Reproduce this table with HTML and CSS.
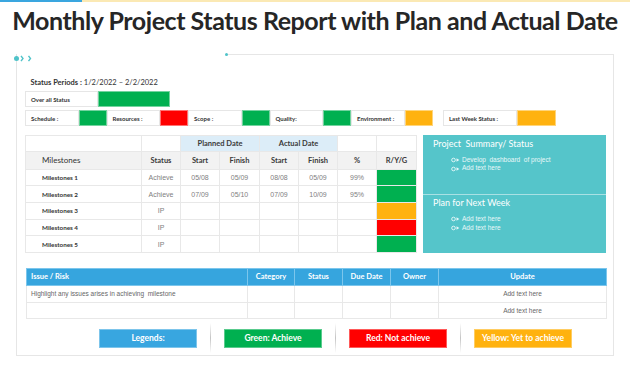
FILE: index.html
```html
<!DOCTYPE html>
<html>
<head>
<meta charset="utf-8">
<title>Monthly Project Status Report</title>
<link rel="stylesheet" href="styles.css">
</head>
<body>
<div class="topbar"><span class="tb-blue"></span><span class="tb-yellow"></span></div>
<h1 class="title">Monthly Project Status Report with Plan and Actual Date</h1>
<div class="panel">
  <div class="marker">
    <span class="mdot"></span>
    <svg class="chev" width="12" height="7" viewBox="0 0 12 7"><polyline points="1,0.8 3,3.5 1,6.2" /><polyline points="8.5,0.8 10.5,3.5 8.5,6.2" /></svg>
  </div>
  <div class="period"><b>Status Periods :</b> 1/2/2022 – 2/2/2022</div>
  <div class="overall">
    <div class="lbl wide">Over all Status</div><div class="sw green big"></div>
  </div>
  <div class="statusrow">
    <div class="lbl">Schedule :</div><div class="sw green"></div>
    <div class="lbl">Resources :</div><div class="sw red"></div>
    <div class="lbl">Scope :</div><div class="sw green"></div>
    <div class="lbl">Quality:</div><div class="sw green"></div>
    <div class="lbl">Environment :</div><div class="sw yellow"></div>
    <div class="lbl lw">Last Week Status :</div><div class="sw yellow lwsw"></div>
  </div>
  <div class="mid">
    <table class="ms">
      <colgroup><col><col><col><col><col><col><col><col></colgroup>
      <tr class="h1"><th></th><th></th><th colspan="2" class="pd">Planned Date</th><th colspan="2" class="pd">Actual Date</th><th></th><th></th></tr>
      <tr class="h2"><th class="first">Milestones</th><th>Status</th><th>Start</th><th>Finish</th><th>Start</th><th>Finish</th><th>%</th><th>R/Y/G</th></tr>
      <tr><td class="first">Milestones 1</td><td>Achieve</td><td>05/08</td><td>05/09</td><td>08/08</td><td>05/09</td><td>99%</td><td class="green"></td></tr>
      <tr><td class="first">Milestones 2</td><td>Achieve</td><td>07/09</td><td>05/10</td><td>07/09</td><td>10/09</td><td>95%</td><td class="green"></td></tr>
      <tr><td class="first">Milestones 3</td><td>IP</td><td></td><td></td><td></td><td></td><td></td><td class="yellow"></td></tr>
      <tr><td class="first">Milestones 4</td><td>IP</td><td></td><td></td><td></td><td></td><td></td><td class="red"></td></tr>
      <tr><td class="first">Milestones 5</td><td>IP</td><td></td><td></td><td></td><td></td><td></td><td class="green"></td></tr>
    </table>
    <div class="summary">
      <div class="sec">
        <div class="sec-title">Project&nbsp; Summary/ Status</div>
        <ul class="bul">
          <li><svg class="bi" width="9" height="6" viewBox="0 0 9 6"><circle cx="2.5" cy="3" r="1.8"/><path d="M5.5 1.2 L8.3 3 L5.5 4.8 Z"/></svg>Develop&nbsp; dashboard&nbsp; of project</li>
          <li><svg class="bi" width="9" height="6" viewBox="0 0 9 6"><circle cx="2.5" cy="3" r="1.8"/><path d="M5.5 1.2 L8.3 3 L5.5 4.8 Z"/></svg>Add text here</li>
        </ul>
      </div>
      <div class="sec">
        <div class="sec-title">Plan for Next Week</div>
        <ul class="bul">
          <li><svg class="bi" width="9" height="6" viewBox="0 0 9 6"><circle cx="2.5" cy="3" r="1.8"/><path d="M5.5 1.2 L8.3 3 L5.5 4.8 Z"/></svg>Add text here</li>
          <li><svg class="bi" width="9" height="6" viewBox="0 0 9 6"><circle cx="2.5" cy="3" r="1.8"/><path d="M5.5 1.2 L8.3 3 L5.5 4.8 Z"/></svg>Add text here</li>
        </ul>
      </div>
    </div>
  </div>
  <table class="issues">
    <colgroup><col><col><col><col><col><col></colgroup>
    <tr class="ih"><th class="first">Issue / Risk</th><th>Category</th><th>Status</th><th>Due Date</th><th>Owner</th><th>Update</th></tr>
    <tr><td class="first">Highlight any issues arises in achieving&nbsp; milestone</td><td></td><td></td><td></td><td></td><td>Add text here</td></tr>
    <tr><td class="first"></td><td></td><td></td><td></td><td></td><td>Add text here</td></tr>
  </table>
  <div class="legends">
    <div class="lg blue">Legends:</div>
    <span class="sep"></span>
    <div class="lg green">Green: Achieve</div>
    <span class="sep"></span>
    <div class="lg red">Red: Not achieve</div>
    <span class="sep"></span>
    <div class="lg yellow">Yellow: Yet to achieve</div>
  </div>
</div>
</body>
</html>
```
FILE: styles.css
```css
* { box-sizing: border-box; }
html, body { margin: 0; padding: 0; background: #fff; }
body {
  width: 630px; height: 380px; overflow: hidden;
  font-family: Lato, "Open Sans", sans-serif; color: #333;
}
.topbar { display: flex; height: 2px; }
.tb-blue { width: 82px; background: #3aa6df; }
.tb-yellow { flex: 1; background: #fbe9b4; }

.title {
  margin: 0; height: 52px; padding-top: 4px;
  font-size: 25px; line-height: 28px; font-weight: 700;
  text-align: center; color: #262626; letter-spacing: -0.45px; white-space: nowrap;
}

.panel {
  position: relative;
  margin: 0 16px; height: 302px;
  border: 1px solid #e6e6e6; border-top: none;
  padding: 23px 7px 0 8px;
}
.panel::before {
  content: ""; position: absolute; top: 0; left: 209px; right: -1px;
  border-top: 1px solid #e6e6e6;
}
.panel::after {
  content: ""; position: absolute; top: -1.5px; left: 207.5px;
  width: 3px; height: 3px; border-radius: 50%; background: #4fc3c9;
}
.marker {
  position: absolute; left: -3.5px; top: 0.5px;
  display: flex; align-items: center; gap: 1px;
}
.mdot { width: 5px; height: 5px; border-radius: 50%; background: #4fc3c9; }
.chev { display: block; }
.chev polyline { fill: none; stroke: #4fc3c9; stroke-width: 1.4; }

.period { font-size: 7.5px; line-height: 12px; padding-left: 5.5px; color: #333; }
.period b { font-weight: 700; }

.overall { display: flex; margin-top: 2px; height: 16px; }
.statusrow { display: flex; margin-top: 3px; height: 16px; }
.lbl {
  width: 53.5px; border: 1px solid #e6e6e6;
  font-size: 6px; font-weight: 700; color: #333;
  padding-left: 5px; display: flex; align-items: center; white-space: nowrap;
}
.lbl.wide { width: 73px; }
.lbl.lw { width: 74px; margin-left: 10.5px; }
.sw { width: 28px; border: 1px solid rgba(255,255,255,0.45); }
.sw.big { width: 72px; }
.sw.lwsw { width: 39px; }
.green { background: #00b050; }
.red { background: #ff0000; }
.yellow { background: #ffb20f; }
.blue { background: #38a6e0; }

.mid { display: flex; gap: 6px; margin-top: 9px; }
table { border-collapse: collapse; table-layout: fixed; }
.ms { width: 391px; }
.ms col:nth-child(1) { width: 116px; }
.ms col:nth-child(2) { width: 39px; }
.ms col:nth-child(3) { width: 39px; }
.ms col:nth-child(4) { width: 40px; }
.ms col:nth-child(5) { width: 39px; }
.ms col:nth-child(6) { width: 39px; }
.ms col:nth-child(7) { width: 39px; }
.ms col:nth-child(8) { width: 40px; }
.ms th, .ms td {
  border: 1px solid #e8e8e8; padding: 0; text-align: center;
  overflow: hidden; white-space: nowrap;
}
.ms tr { height: 16.7px; }
.ms tr.h1 { height: 16px; }
.ms tr.h2 { height: 17.5px; background: #f2f2f2; }
.ms th { font-size: 7.5px; font-weight: 700; color: #3a3a3a; }
.ms th.pd { background: #dcedf8; }
.ms th.first { text-align: left; padding-left: 16px; font-weight: 400; font-size: 8px; color: #333; }
.ms td {
  font-family: "Liberation Sans", Arial, sans-serif;
  font-size: 7px; color: #808080;
}
.ms td.first {
  text-align: left; padding-left: 16px;
  font-family: Lato, sans-serif; font-size: 6.3px; font-weight: 700; color: #333;
}
.ms td.green, .ms td.red, .ms td.yellow { border-color: #e8e8e8; }

.summary {
  flex: 1; background: #55c5ca;
  display: flex; flex-direction: column;
}
.sec { height: 58.6px; padding: 3px 0 0 10px; color: #fff; }
.sec + .sec { height: 58.7px; border-top: 1px solid #a9e1e4; padding-top: 2.5px; }
.sec-title { font-size: 9px; line-height: 11px; color: #fff; }
.bul {
  list-style: none; margin: 7px 0 0 0; padding: 0 0 0 17.5px;
  font-family: "Liberation Sans", Arial, sans-serif; font-size: 6.5px; line-height: 8.4px;
  color: #eaf8f9;
}
.bul li { display: flex; align-items: center; white-space: nowrap; }
.bi { margin-right: 2.5px; flex: none; }
.bi circle { fill: none; stroke: #eaf8f9; stroke-width: 0.9; }
.bi path { fill: #eaf8f9; }

.issues { width: 580px; margin: 15px 0 0 1px; }
.issues col:nth-child(1) { width: 221px; }
.issues col:nth-child(2) { width: 47px; }
.issues col:nth-child(3) { width: 48px; }
.issues col:nth-child(4) { width: 48px; }
.issues col:nth-child(5) { width: 48px; }
.issues col:nth-child(6) { width: 168px; }
.issues th, .issues td { border: 1px solid #e8e8e8; padding: 0; text-align: center; white-space: nowrap; overflow: hidden; }
.issues tr { height: 16.7px; }
.issues tr.ih { height: 17px; background: #36a5de; }
.issues th { color: #fff; font-size: 7.5px; font-weight: 700; border-color: #7cc6ec; }
.issues th.first, .issues td.first { text-align: left; padding-left: 4px; }
.issues td { font-family: "Liberation Sans", Arial, sans-serif; font-size: 6.5px; color: #666; }

.legends {
  display: flex; align-items: center; height: 19px;
  margin-top: 9.5px; padding-left: 74px;
}
.lg {
  width: 98px; height: 19px; flex: none;
  display: flex; align-items: center; justify-content: center;
  color: #fff; font-size: 8.5px; font-weight: 700; white-space: nowrap;
  border: 1px solid rgba(255,255,255,0.35);
}
.sep {
  width: 1px; height: 30px; margin: 0 13px; flex: none;
  background: linear-gradient(to bottom, rgba(190,190,190,0), #c4c4c4 50%, rgba(190,190,190,0));
}
```
